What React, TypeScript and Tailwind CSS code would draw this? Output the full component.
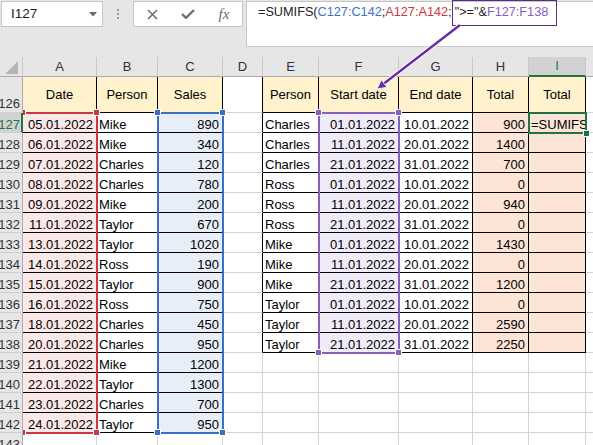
import React from 'react';

const A = ['05.01.2022','06.01.2022','07.01.2022','08.01.2022','09.01.2022','11.01.2022','13.01.2022','14.01.2022','15.01.2022','16.01.2022','18.01.2022','20.01.2022','21.01.2022','22.01.2022','23.01.2022','24.01.2022'];
const B = ['Mike','Mike','Charles','Charles','Mike','Taylor','Taylor','Ross','Taylor','Ross','Charles','Charles','Mike','Taylor','Charles','Taylor'];
const C = ['890','340','120','780','200','670','1020','190','900','750','450','950','1200','1300','700','950'];
const E = ['Charles','Charles','Charles','Ross','Ross','Ross','Mike','Mike','Mike','Taylor','Taylor','Taylor'];
const F = ['01.01.2022','11.01.2022','21.01.2022','01.01.2022','11.01.2022','21.01.2022','01.01.2022','11.01.2022','21.01.2022','01.01.2022','11.01.2022','21.01.2022'];
const G = ['10.01.2022','20.01.2022','31.01.2022','10.01.2022','20.01.2022','31.01.2022','10.01.2022','20.01.2022','31.01.2022','10.01.2022','20.01.2022','31.01.2022'];
const H = ['900','1400','700','0','940','0','1430','0','1200','0','2590','2250'];

const WA = 'w-[74px]';
const WB = 'w-[61px]';
const WC = 'w-[65px]';
const WD = 'w-[40px]';
const WE = 'w-[56px]';
const WF = 'w-[80px]';
const WG = 'w-[74px]';
const WH = 'w-[56px]';
const WI = 'w-[57px]';
const WJ = 'w-[20px]';

const PINK = 'bg-[#fbe8e8]';
const BLUE = 'bg-[#e8eef8]';
const PURP = 'bg-[#efebf8]';
const PEACH = 'bg-[#fce4d6]';
const YEL = 'bg-[#fff2cc]';

type CellProps = { w: string; t?: string; al?: 'l' | 'r' | 'c'; bg?: string; rb?: boolean; bb?: boolean; head?: boolean };

function Cell({ w, t, al = 'l', bg = 'bg-white', rb, bb, head }: CellProps) {
  const cls = [
    'shrink-0 h-full border-r border-b flex overflow-hidden whitespace-nowrap text-[13px] text-black',
    head ? 'items-center leading-[15px] px-[2px]' : 'items-end leading-[14px]',
    !head && al === 'r' ? 'pr-[3px] pl-[1px]' : '',
    !head && al !== 'r' ? 'pl-[2px] pr-[1px]' : '',
    w,
    bg,
    rb ? 'border-r-black' : 'border-r-[#d4d4d4]',
    bb ? 'border-b-black' : 'border-b-[#d4d4d4]',
    al === 'r' ? 'justify-end' : al === 'c' ? 'justify-center' : 'justify-start',
  ].join(' ');
  return <div className={cls}>{t}</div>;
}

function RowHead({ n, active, tall }: { n: number; active?: boolean; tall?: boolean }) {
  return (
    <div
      className={[
        'shrink-0 w-[23px] h-full flex items-end justify-end overflow-hidden text-[13px] leading-[14px] border-b border-b-[#d0d0d0]',
        active ? 'bg-[#d2d2d2] text-[#217346] border-r-2 border-r-[#217346] pr-[1px]' : 'bg-[#e6e6e6] text-[#333] border-r border-r-[#ababab] pr-[2px]',
        tall ? 'pb-[1px]' : '',
      ].join(' ')}
    >
      <span className="shrink-0">{n}</span>
    </div>
  );
}

function ColHead({ w, t, active }: { w: string; t: string; active?: boolean }) {
  return (
    <div
      className={[
        'shrink-0 h-full flex items-center justify-center text-[13px] border-r border-r-[#c8c8c8]',
        w,
        active ? 'bg-[#d2d2d2] text-[#217346] border-b-2 border-b-[#217346]' : 'bg-[#e6e6e6] text-[#333] border-b border-b-[#ababab]',
      ].join(' ')}
    >
      {t}
    </div>
  );
}

export default function App() {
  const rows = Array.from({ length: 17 }, (_, i) => i);
  return (
    <div className="relative w-[593px] h-[445px] overflow-hidden bg-white font-['Liberation_Sans',Arial,sans-serif]">
      {/* Toolbar */}
      <div className="h-[57px] bg-[#e6e6e6] flex items-start pt-[1px] pl-[1px]">
        <div className="w-[102px] h-[26px] shrink-0 bg-white border border-[#c6c6c6] flex items-center justify-between pl-[9px] pr-[5px] text-[13.5px] text-[#222]">
          <span>I127</span>
          <svg width="8" height="5" viewBox="0 0 8 5">
            <polygon points="0,0 8,0 4,4.5" fill="#6a6a6a" />
          </svg>
        </div>
        <div className="w-[30px] shrink-0 flex flex-col items-center gap-[2px] pt-[8px]">
          <div className="w-[2px] h-[2px] bg-[#9a9a9a]" />
          <div className="w-[2px] h-[2px] bg-[#9a9a9a]" />
          <div className="w-[2px] h-[2px] bg-[#9a9a9a]" />
        </div>
        <div className="w-[110px] h-[26px] shrink-0 bg-white border border-[#c6c6c6] flex items-center">
          <div className="w-[36px] flex justify-center">
            <svg width="11" height="11" viewBox="0 0 11 11">
              <path d="M1 1 L10 10 M10 1 L1 10" stroke="#6e6e6e" strokeWidth="1.6" fill="none" />
            </svg>
          </div>
          <div className="w-[36px] flex justify-center">
            <svg width="14" height="10" viewBox="0 0 14 10">
              <path d="M1 5 L5 8.8 L13 1" stroke="#6e6e6e" strokeWidth="2.4" fill="none" />
            </svg>
          </div>
          <div className="w-[36px] flex justify-center">
            <span className="font-['Liberation_Serif',serif] italic text-[15px] leading-[15px] text-[#6a6a6a]">fx</span>
          </div>
        </div>
        <div className="ml-[3px] flex-1 h-[46px] bg-white border border-[#c6c6c6] border-r-0">
          <div className="-mt-[2px] h-[26px] flex items-center pl-[11px] text-[12.7px] whitespace-nowrap text-[#222]">
            <span>=SUMIFS(</span>
            <span className="text-[#3a72cc]">C127:C142</span>
            <span>;</span>
            <span className="text-[#d0343c]">A127:A142</span>
            <span>;</span>
            <span className="h-full flex items-center border-[1.5px] border-[#5a2a8c] pl-[2px] pr-[8px]">
              <span>"&gt;="&amp;</span>
              <span className="text-[#8a5cc8]">F127:F138</span>
            </span>
          </div>
        </div>
      </div>

      {/* Column headers */}
      <div className="flex h-[20px]">
        <div className="shrink-0 w-[23px] h-full bg-[#e6e6e6] border-r border-r-[#c8c8c8] border-b border-b-[#ababab] flex items-end justify-end pr-[4px] pb-[2px]">
          <svg width="13" height="13" viewBox="0 0 13 13">
            <polygon points="13,0 13,13 0,13" fill="#b5b5b5" />
          </svg>
        </div>
        <ColHead w={WA} t="A" />
        <ColHead w={WB} t="B" />
        <ColHead w={WC} t="C" />
        <ColHead w={WD} t="D" />
        <ColHead w={WE} t="E" />
        <ColHead w={WF} t="F" />
        <ColHead w={WG} t="G" />
        <ColHead w={WH} t="H" />
        <ColHead w={WI} t="I" active />
        <ColHead w={WJ} t="" />
      </div>

      {/* Row 126 */}
      <div className="flex h-[36px]">
        <RowHead n={126} tall />
        <Cell w={WA} t="Date" al="c" bg={YEL} rb bb head />
        <Cell w={WB} t="Person" al="c" bg={YEL} rb bb head />
        <Cell w={WC} t="Sales" al="c" bg={YEL} rb bb head />
        <Cell w={WD} rb />
        <Cell w={WE} t="Person" al="c" bg={YEL} rb bb head />
        <Cell w={WF} t="Start date" al="c" bg={YEL} rb bb head />
        <Cell w={WG} t="End date" al="c" bg={YEL} rb bb head />
        <Cell w={WH} t="Total" al="c" bg={YEL} rb bb head />
        <Cell w={WI} t="Total" al="c" bg={YEL} rb bb head />
        <Cell w={WJ} />
      </div>

      {rows.map((i) => {
        const L = i < 16;
        const R = i < 12;
        return (
          <div key={i} className="flex h-[20px]">
            <RowHead n={127 + i} active={i === 0} />
            <Cell w={WA} t={A[i]} al="r" bg={L ? PINK : 'bg-white'} rb={L} bb={L} />
            <Cell w={WB} t={B[i]} rb={L} bb={L} />
            <Cell w={WC} t={C[i]} al="r" bg={L ? BLUE : 'bg-white'} rb={L} bb={L} />
            <Cell w={WD} rb={R} />
            <Cell w={WE} t={E[i]} rb={R} bb={R} />
            <Cell w={WF} t={F[i]} al="r" bg={R ? PURP : 'bg-white'} rb={R} bb={R} />
            <Cell w={WG} t={G[i]} al="r" rb={R} bb={R} />
            <Cell w={WH} t={H[i]} al="r" bg={R ? PEACH : 'bg-white'} rb={R} bb={R} />
            <Cell w={WI} t={i === 0 ? '=SUMIFS(' : ''} bg={R ? PEACH : 'bg-white'} rb={R} bb={R} />
            <Cell w={WJ} />
          </div>
        );
      })}

      {/* Range highlight overlays (clipped to cell area) */}
      <div className="absolute left-[23px] top-[77px] right-0 bottom-0 overflow-hidden pointer-events-none">
        {/* red A127:A142 */}
        <div className="absolute left-[-1px] top-[35px] w-[76px] h-[322px] border-t-2 border-r-2 border-b-2 border-[#c8383e]" />
        <div className="absolute left-[-4px] top-[32px] w-[7px] h-[7px] bg-[#c8383e] border border-white" />
        <div className="absolute left-[70px] top-[32px] w-[7px] h-[7px] bg-[#c8383e] border border-white" />
        <div className="absolute left-[-4px] top-[352px] w-[7px] h-[7px] bg-[#c8383e] border border-white" />
        <div className="absolute left-[70px] top-[352px] w-[7px] h-[7px] bg-[#c8383e] border border-white" />

        {/* blue C127:C142 */}
        <div className="absolute left-[134px] top-[35px] w-[67px] h-[322px] border-2 border-[#3a6ec8]" />
        <div className="absolute left-[131px] top-[32px] w-[7px] h-[7px] bg-[#3a6ec8] border border-white" />
        <div className="absolute left-[196px] top-[32px] w-[7px] h-[7px] bg-[#3a6ec8] border border-white" />
        <div className="absolute left-[131px] top-[352px] w-[7px] h-[7px] bg-[#3a6ec8] border border-white" />
        <div className="absolute left-[196px] top-[352px] w-[7px] h-[7px] bg-[#3a6ec8] border border-white" />

        {/* purple F127:F138 */}
        <div className="absolute left-[295px] top-[35px] w-[82px] h-[242px] border-2 border-[#8460c0]" />
        <div className="absolute left-[292px] top-[32px] w-[7px] h-[7px] bg-[#8460c0] border border-white" />
        <div className="absolute left-[372px] top-[32px] w-[7px] h-[7px] bg-[#8460c0] border border-white" />
        <div className="absolute left-[292px] top-[272px] w-[7px] h-[7px] bg-[#8460c0] border border-white" />
        <div className="absolute left-[372px] top-[272px] w-[7px] h-[7px] bg-[#8460c0] border border-white" />

        {/* active cell I127 */}
        <div className="absolute left-[505px] top-[35px] w-[59px] h-[22px] border-2 border-[#217346]" />
        <div className="absolute left-[560px] top-[53px] w-[7px] h-[7px] bg-[#217346] border border-white" />
      </div>

      {/* Arrow */}
      <svg className="absolute left-0 top-0 pointer-events-none" width="593" height="445" viewBox="0 0 593 445">
        <line x1="460" y1="25" x2="384" y2="83.5" stroke="#ffffff" strokeWidth="4.5" />
        <line x1="460" y1="25" x2="384" y2="83.5" stroke="#6a2ca0" strokeWidth="2.4" />
        <polygon points="377,89 387,87.2 381.4,79.8" fill="#6a2ca0" stroke="#ffffff" strokeWidth="0.8" />
      </svg>
    </div>
  );
}
